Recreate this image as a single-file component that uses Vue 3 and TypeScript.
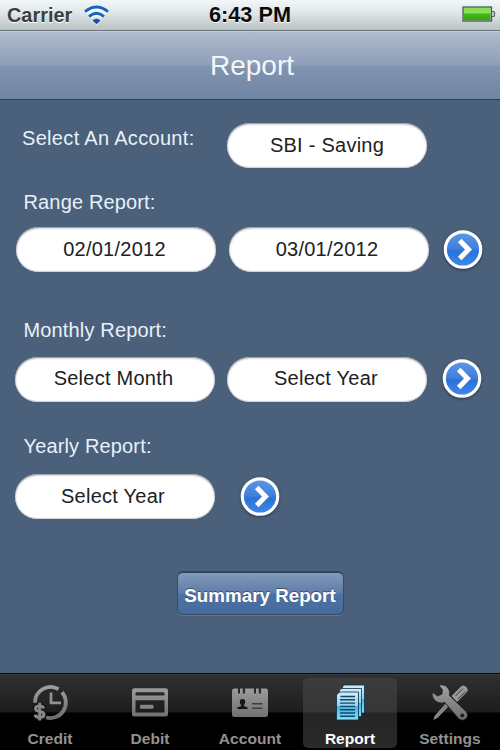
<script setup lang="ts">
import { ref } from 'vue'

interface Field {
  text: string
}
interface Section {
  id: string
  label: string
  fields: Field[]
}

const sections: Section[] = [
  { id: 'range', label: 'Range Report:', fields: [{ text: '02/01/2012' }, { text: '03/01/2012' }] },
  { id: 'monthly', label: 'Monthly Report:', fields: [{ text: 'Select Month' }, { text: 'Select Year' }] },
  { id: 'yearly', label: 'Yearly Report:', fields: [{ text: 'Select Year' }] },
]

const tabs: string[] = ['Credit', 'Debit', 'Account', 'Report', 'Settings']
const active = ref<string>('Report')
</script>

<template>
  <div class="screen">
    <header class="status">
      <div class="carrier">
        <span>Carrier</span>
        <svg width="27" height="20" viewBox="0 0 27 20">
          <g fill="none" stroke="#f7fbff" stroke-width="5.4">
            <path d="M2.5 7.2Q13.5-2 24.5 7.2" />
            <path d="M6.2 11.8Q13.5 5.700 20.8 11.8" />
          </g>
          <path d="M8.500 15.500Q13.5 11.500 18.500 15.500L13.5 20Z" fill="#f7fbff" />
          <g fill="none" stroke="#1763bd" stroke-width="3">
            <path d="M2 6.7Q13.5-2.600 25 6.7" />
            <path d="M6 11.500Q13.5 5 21 11.500" />
          </g>
          <path d="M9.3 15.5Q13.5 11.9 17.7 15.500L13.5 19.2Z" fill="#1250ad" />
        </svg>
      </div>
      <span class="time">6:43 PM</span>
      <svg class="battery" width="34" height="17" viewBox="0 0 34 17">
        <defs>
          <linearGradient id="charge" x1="0" y1="0" x2="0" y2="1">
            <stop offset="0" stop-color="#86dc55" />
            <stop offset=".4" stop-color="#8be45b" />
            <stop offset=".5" stop-color="#43b91c" />
            <stop offset="1" stop-color="#37a50f" />
          </linearGradient>
        </defs>
        <rect x="1" y="1" width="28.5" height="14" fill="#a9dd90" stroke="#4b5963" stroke-width="1.3" />
        <rect x="2" y="2" width="26.5" height="12" fill="url(#charge)" />
        <path d="M30 5.5H31.5Q32.5 5.5 32.5 6.5V9.5Q32.5 10.5 31.5 10.5H30" fill="#c8d0d5" stroke="#56626b" stroke-width="1.2" />
      </svg>
    </header>

    <nav class="navbar"><h1>Report</h1></nav>

    <main class="content">
      <div class="account-row">
        <span class="label">Select An Account:</span>
        <button class="pill">SBI - Saving</button>
      </div>

      <section v-for="s in sections" :key="s.id" class="section" :class="s.id">
        <span class="label">{{ s.label }}</span>
        <div class="fields">
          <button v-for="f in s.fields" :key="f.text" class="pill">{{ f.text }}</button>
          <button class="go" aria-label="Go">
            <svg width="44" height="44" viewBox="0 0 44 44">
              <defs>
                <linearGradient :id="'go-' + s.id" x1="0" y1="0" x2="0" y2="1">
                  <stop offset="0" stop-color="#5d98e6" />
                  <stop offset=".48" stop-color="#3e80dc" />
                  <stop offset=".55" stop-color="#2b72d8" />
                  <stop offset="1" stop-color="#4089ea" />
                </linearGradient>
              </defs>
              <circle cx="22" cy="21.5" r="17.7" :fill="'url(#go-' + s.id + ')'" stroke="#fff" stroke-width="3.2" />
              <path d="M18.700 12.500L27.500 21.500L18.700 30.500" fill="none" stroke="#fff" stroke-width="5" />
            </svg>
          </button>
        </div>
      </section>

      <button class="summary">Summary Report</button>
    </main>

    <footer class="tabbar">
      <button v-for="t in tabs" :key="t" class="tab" :class="{ on: t === active }" @click="active = t">
        <svg class="icon" width="40" height="40" viewBox="0 0 40 40">
          <defs>
            <linearGradient id="metal" gradientUnits="userSpaceOnUse" x1="0" y1="2" x2="0" y2="38">
              <stop offset="0" stop-color="#a2a2a2" />
              <stop offset="1" stop-color="#6c6c6c" />
            </linearGradient>
            <linearGradient id="sheet" x1="0" y1="0" x2="0" y2="1">
              <stop offset="0" stop-color="#d4eefa" />
              <stop offset=".5" stop-color="#93d0f0" />
              <stop offset=".52" stop-color="#4eaedd" />
              <stop offset="1" stop-color="#7fe2fa" />
            </linearGradient>
          </defs>
          <g v-if="t === 'Credit'" fill="none" stroke="url(#metal)">
            <path d="M5 20.800A15.5 15.5 0 0 1 28.500 7.200M32 10.300A15.5 15.5 0 0 1 16 35.400" stroke-width="3.8" />
            <path d="M21 10.500V20.800H31" stroke="#929292" stroke-width="2.7" />
            <g stroke="#111" stroke-width="5.500">
              <path d="M13.800 26.300Q12.800 24 9.700 24Q5.500 24 5.500 26.500Q5.500 28.900 9.700 29.500Q14 30.100 14 32.600Q14 35.500 9.700 35.500Q5.700 35.500 5 32.600" />
            </g>
            <path d="M13.800 26.300Q12.800 24 9.700 24Q5.500 24 5.500 26.500Q5.500 28.900 9.700 29.500Q14 30.100 14 32.600Q14 35.500 9.700 35.500Q5.700 35.500 5 32.600M9.700 20.800V38.500" stroke="#888" stroke-width="2.9" />
          </g>
          <g v-else-if="t === 'Debit'">
            <path fill="url(#metal)" fill-rule="evenodd" d="M4.500 6.300H35.500Q38 6.300 38 8.800V32Q38 34.500 35.500 34.500H4.500Q2 34.500 2 32V8.800Q2 6.300 4.500 6.300ZM6.500 10.300Q5.500 10.300 5.500 11.300V13.500H34.500V11.300Q34.500 10.300 33.500 10.300ZM5.500 18.200V30.500H34.500V18.200Z" />
            <rect x="10" y="22.800" width="13.500" height="4" rx="1" fill="#858585" />
          </g>
          <g v-else-if="t === 'Account'">
            <path fill="url(#metal)" d="M4.500 6.500H8V11.5H10V6.500H12.800V11.5H15V6.500H24V11.5H26V6.500H28.800V11.5H31V6.500H35.5Q38 6.500 38 9V32.500Q38 35 35.500 35H4.500Q2 35 2 32.500V9Q2 6.500 4.500 6.500Z" />
            <path fill="#151515" d="M12.500 17Q15.200 17 15.200 19.8Q15.200 22 13.800 23.2V24L17.500 25.4V27H7.300V25.4L11.200 24V23.2Q9.800 22 9.800 19.8Q9.800 17 12.500 17Z" />
            <path d="M22 21.700H32.500M22 26.300H32.500" stroke="#3c3c3c" stroke-width="1.600" />
          </g>
          <g v-else-if="t === 'Report'" fill="url(#sheet)" stroke="#092e43" stroke-width=".8">
            <path d="M14 3H34.500V31H12.500V5Z" />
            <path d="M11 6.5H31.500V34.500H9.500V8.500Z" />
            <path d="M9.5 10H28.500V38H6.5V13Z" />
            <path d="M10.5 14.500H25M10 17.800H25M10 21.100H25M10 24.400H25M10 27.700H25M10 31H25M10 34.300H25" stroke="#104967" stroke-width="1.400" />
          </g>
          <g v-else>
            <path d="M3.300 38L4.500 34L15.500 21.500L18.500 24.5L7.500 36Z" fill="#858585" />
            <path d="M21.500 14L31 4.500Q33.500 2.200 36.300 5Q39 8 36.500 10.500L27 20Z" fill="#999" />
            <path d="M25.500 14L33 6.500M28 17L35.500 9.500" stroke="#3b3b3b" stroke-width="1" />
            <path fill="url(#metal)" stroke="#141414" stroke-width=".7" d="M8.700 3.300Q14.500 1.700 18 6Q20.500 9.300 19.500 13.500L36.500 30Q39 33.300 36.200 36.600Q32.700 39.700 29 37L14.800 20.500Q7.500 22.500 3.500 16.800Q1.700 13.800 2.300 10L7.500 14L12 12L12.300 7.500Z" />
            <circle cx="32.300" cy="33.400" r="2" fill="#202020" />
          </g>
        </svg>
        <span>{{ t }}</span>
      </button>
    </footer>
  </div>
</template>

<style>
body {
  margin: 0;
  background: #4a607b;
}
</style>

<style scoped>
.screen {
  box-sizing: border-box;
  width: 500px;
  height: 750px;
  display: flex;
  flex-direction: column;
  overflow: hidden;
  background: #4a607b;
  font-family: 'Liberation Sans', Arial, sans-serif;
}
button {
  border: 0;
  margin: 0;
  padding: 0;
  background: none;
  font: inherit;
  display: block;
  flex-shrink: 0;
}
svg {
  display: block;
}
.status {
  box-sizing: border-box;
  height: 31px;
  flex-shrink: 0;
  display: grid;
  grid-template-columns: 1fr auto 1fr;
  align-items: center;
  padding: 0 4px 1px 7px;
  background: linear-gradient(#f2f8f9, #dfe5e6 45%, #bac2c4);
  border-bottom: 1px solid #68737a;
  font-weight: bold;
}
.carrier {
  display: flex;
  gap: 11px;
  align-items: center;
  font-size: 19.900px;
  line-height: 28px;
  padding-top: 1px;
  color: #3b3e40;
  text-shadow: 0 1px #fff;
}
.time {
  font-size: 21.700px;
  line-height: 28px;
  margin-left: -3px;
  color: #0b0b0b;
  text-shadow: 0 1px #fff;
}
.battery {
  justify-self: end;
  margin-top: -1px;
}
.navbar {
  box-sizing: border-box;
  height: 69px;
  flex-shrink: 0;
  display: flex;
  justify-content: center;
  background: linear-gradient(#b0bccd, #8e9fb9 48%, #8094b0 52%, #7085a4);
  border-top: 1px solid #c5cfdb;
  border-bottom: 1px solid #2d3d50;
}
h1 {
  margin: 0;
  padding-left: 4px;
  font-size: 28px;
  font-weight: normal;
  line-height: 68px;
  color: #f4f7fa;
}
.content {
  flex: 1;
  display: flex;
  flex-direction: column;
  align-items: flex-start;
}
.label {
  font-size: 20px;
  line-height: 24px;
  letter-spacing: 0.150px;
  color: #e8f1f9;
  white-space: nowrap;
}
.pill {
  box-sizing: border-box;
  width: 200px;
  height: 45px;
  padding: 0 3px 1px 0;
  border-radius: 23px;
  background: #fff;
  box-shadow: inset 0 1px 2px #85878b, inset 0 -1px 1px #ced3da;
  font-size: 20px;
  letter-spacing: 0.250px;
  color: #202124;
  text-align: center;
}
.account-row {
  display: flex;
  align-items: flex-start;
  justify-content: space-between;
  box-sizing: border-box;
  width: 427px;
  padding: 23px 0 0 22px;
}
.account-row .label {
  padding-top: 3px;
  letter-spacing: 0.320px;
}
.account-row .pill {
  padding-right: 0;
}
.section {
  display: flex;
  flex-direction: column;
  padding-left: 14.5px;
}
.section .label {
  padding-left: 9px;
}
.fields {
  display: flex;
  align-items: center;
  gap: 12.5px;
}
.go {
  width: 44px;
  height: 44px;
  border-radius: 50%;
}
.go svg {
  filter: drop-shadow(0 1px 1.5px #26384f);
}
.range {
  padding-top: 22px;
}
.range .fields {
  padding: 13px 0 0 1.5px;
}
.monthly {
  padding-top: 46px;
}
.monthly .fields {
  padding-top: 14.500px;
}
.monthly .pill {
  padding-right: 2px;
}
.yearly {
  padding-top: 32.500px;
}
.yearly .fields {
  padding-top: 16px;
}
.yearly .go {
  margin-left: 10.5px;
}
.summary {
  align-self: center;
  box-sizing: border-box;
  width: 167px;
  height: 44px;
  margin: 52px 0 0 20px;
  padding-top: 4px;
  border-radius: 6px;
  border: 1px solid #344b6a;
  border-top: 2px solid #30435b;
  background: linear-gradient(#829abb, #5e7da7 49%, #4c71a2 51%, #466b9d);
  box-shadow: 0 1px #607894;
  color: #fff;
  font-size: 18.800px;
  font-weight: bold;
  text-shadow: 0 -1px #3b516f;
  white-space: nowrap;
}
.tabbar {
  box-sizing: border-box;
  height: 77px;
  flex-shrink: 0;
  display: grid;
  grid-template-columns: repeat(5, 100px);
  border-top: 1px solid #090909;
  background: linear-gradient(#424242 0, #303030 1px, #1d1d1d 38px, #000 39px);
}
.tab {
  width: 94px;
  height: 70px;
  margin: 4px 3px 0;
  padding-top: 4px;
  border-radius: 5px;
  display: flex;
  flex-direction: column;
  align-items: center;
  color: #929292;
  font-size: 15.500px;
  font-weight: bold;
  line-height: 18px;
}
.tab span {
  margin-top: 8px;
  letter-spacing: 0.050px;
  height: 18px;
}
.tab svg {
  flex-shrink: 0;
}
.tab.on {
  background: linear-gradient(#3c3c3c, #363636 34px, #252525 35px, #292929);
  color: #fff;
}
</style>
